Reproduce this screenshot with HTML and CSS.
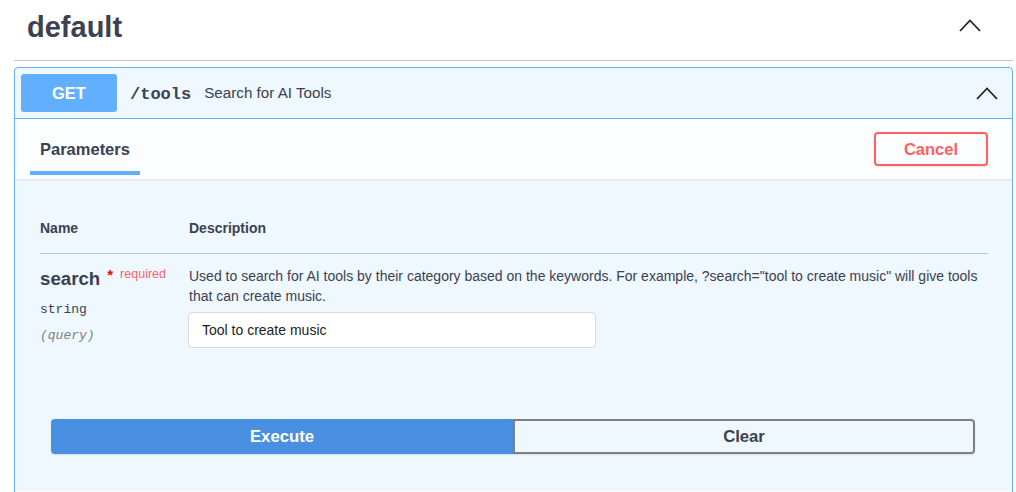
FILE: index.html
```html
<!DOCTYPE html>
<html>
<head>
<meta charset="utf-8">
<link rel="stylesheet" href="styles.css">
</head>
<body>
<div class="wrap">
  <div class="tag">
    <h3 class="tag-title">default</h3>
    <svg class="chev chev-tag" width="22" height="13" viewBox="0 0 22 13"><polyline points="1,12 11,1.5 21,12" fill="none" stroke="#222" stroke-width="1.8"/></svg>
  </div>
  <div class="opblock">
    <div class="summary">
      <span class="method">GET</span>
      <span class="path">/tools</span>
      <span class="summary-desc">Search for AI Tools</span>
      <svg class="chev" width="22" height="13" viewBox="0 0 22 13"><polyline points="1,12 11,1.5 21,12" fill="none" stroke="#222" stroke-width="1.8"/></svg>
    </div>
    <div class="section-header">
      <div class="tab">
        <span class="tab-label">Parameters</span>
        <span class="tab-bar"></span>
      </div>
      <button class="btn-cancel">Cancel</button>
    </div>
    <div class="params-body">
      <div class="params-table">
        <div class="th th-name">Name</div>
        <div class="th">Description</div>
        <div class="td td-name">
          <div class="param-name">search<span class="star">*</span><span class="req">required</span></div>
          <div class="param-type">string</div>
          <div class="param-in">(query)</div>
        </div>
        <div class="td">
          <p class="param-desc">Used to search for AI tools by their category based on the keywords. For example, ?search="tool to create music" will give tools that can create music.</p>
          <input class="param-input" type="text" value="Tool to create music">
        </div>
      </div>
      <div class="btn-group">
        <button class="btn-execute">Execute</button>
        <button class="btn-clear">Clear</button>
      </div>
    </div>
    <div class="responses-header"></div>
  </div>
</div>
</body>
</html>
```
FILE: styles.css
```css
html, body {
  margin: 0;
  padding: 0;
  background: #fff;
  font-family: "Liberation Sans", Arial, sans-serif;
  color: #3b4151;
  overflow: hidden;
}

.wrap {
  padding: 0 3px 0 14px;
}

.tag {
  height: 60px;
  display: flex;
  justify-content: space-between;
  align-items: flex-start;
  border-bottom: 1px solid #c4c6cb;
  padding: 0 32px 0 13px;
}

.tag-title {
  margin: 0;
  padding-top: 11px;
  font-size: 29px;
  font-weight: bold;
  line-height: 33px;
  color: #3b4151;
}

.chev {
  display: block;
  flex: none;
}

.chev-tag {
  margin-top: 19px;
}

.opblock {
  margin-top: 6px;
  border: 1px solid #61affe;
  border-radius: 4px;
  background: #eff7ff;
  overflow: hidden;
}

.summary {
  display: flex;
  align-items: center;
  padding: 6px 14px 6px 6px;
  border-bottom: 1px solid #61affe;
}

.method {
  width: 96px;
  height: 38px;
  border-radius: 3px;
  background: #61affe;
  color: #fff;
  font-weight: bold;
  font-size: 16.5px;
  display: flex;
  align-items: center;
  justify-content: center;
}

.path {
  margin-left: 13px;
  font-family: "Liberation Mono", "DejaVu Sans Mono", monospace;
  font-weight: bold;
  font-size: 17px;
  color: #3b4151;
  position: relative;
  top: 1px;
}

.summary-desc {
  margin-left: 13px;
  font-size: 15.2px;
  color: #3b4151;
  flex: 1;
  position: relative;
  top: -1px;
}

.section-header {
  height: 60px;
  display: flex;
  justify-content: space-between;
  align-items: center;
  padding: 0 24px 0 15px;
  background: #fcfdff;
  box-shadow: 0 1px 2px rgba(0, 0, 0, 0.1);
  position: relative;
}

.tab {
  align-self: stretch;
  display: flex;
  flex-direction: column;
  padding: 0;
}

.tab-label {
  display: block;
  padding: 21px 10px 0;
  font-size: 16.5px;
  font-weight: bold;
  line-height: 19px;
  color: #3b4151;
}

.tab-bar {
  display: block;
  margin-top: 12px;
  height: 4px;
  width: 110px;
  background: #61affe;
}

.btn-cancel {
  width: 114px;
  height: 34px;
  border: 2px solid #ff6060;
  border-radius: 4px;
  background: transparent;
  color: #ff6060;
  font-family: "Liberation Sans", Arial, sans-serif;
  font-weight: bold;
  font-size: 16.5px;
  box-shadow: 0 1px 2px rgba(0, 0, 0, 0.1);
  margin-top: 0;
  padding: 0;
}

.params-body {
  padding: 41px 24px 0 25px;
}

.params-table {
  display: grid;
  grid-template-columns: 149px 1fr;
}

.th {
  font-size: 14px;
  font-weight: bold;
  line-height: 17px;
  padding-bottom: 16px;
  border-bottom: 1px solid #bcc3cd;
}

.td {
  padding-top: 12px;
}

.param-name {
  font-size: 18.7px;
  font-weight: bold;
  line-height: 26px;
  color: #3b4151;
  white-space: nowrap;
}

.star {
  color: #f00;
  font-size: 15px;
  margin-left: 7px;
  position: relative;
  top: -5px;
}

.req {
  color: #ff6368;
  font-size: 12.5px;
  font-weight: normal;
  margin-left: 7px;
  position: relative;
  top: -7px;
}

.param-type {
  margin-top: 8px;
  font-family: "Liberation Mono", "DejaVu Sans Mono", monospace;
  font-size: 13px;
  line-height: 16px;
  color: #3b4151;
}

.param-in {
  margin-top: 10px;
  font-family: "Liberation Mono", "DejaVu Sans Mono", monospace;
  font-size: 13px;
  font-style: italic;
  line-height: 16px;
  color: #808080;
}

.param-desc {
  margin: 0;
  font-size: 14px;
  line-height: 20px;
  color: #3b4151;
}

.param-input {
  display: block;
  margin: 6px 0 0 -1px;
  width: 408px;
  height: 36px;
  box-sizing: border-box;
  border: 1px solid #d9d9d9;
  border-radius: 4px;
  background: #fff;
  padding: 0 13px;
  font-family: "Liberation Sans", Arial, sans-serif;
  font-size: 14px;
  color: #222;
  outline: none;
}

.btn-group {
  display: flex;
  margin: 71px 13px 0 11px;
  padding-bottom: 37px;
}

.btn-execute,
.btn-clear {
  flex: 1;
  height: 35px;
  font-family: "Liberation Sans", Arial, sans-serif;
  font-weight: bold;
  font-size: 16.7px;
  padding: 0;
  box-shadow: 0 1px 2px rgba(0, 0, 0, 0.1);
}

.btn-execute {
  background: #4990e2;
  color: #fff;
  border: 2px solid #4990e2;
  border-radius: 4px 0 0 4px;
}

.btn-clear {
  background: transparent;
  color: #3b4151;
  border: 2px solid #808080;
  border-radius: 0 4px 4px 0;
}

.responses-header {
  height: 60px;
  background: #fcfdff;
}
```
